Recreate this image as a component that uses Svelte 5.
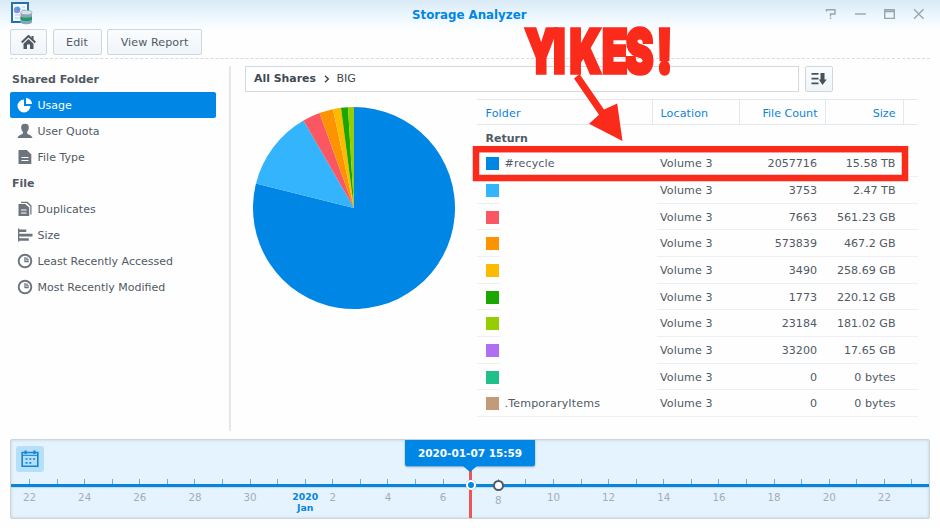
<script>
  const rows = [
    ['#0086e5', '#recycle', '2057716', '15.58 TB'],
    ['#33b4fd', '', '3753', '2.47 TB'],
    ['#fa5762', '', '7663', '561.23 GB'],
    ['#fc9300', '', '573839', '467.2 GB'],
    ['#fdbb00', '', '3490', '258.69 GB'],
    ['#1ca600', '', '1773', '220.12 GB'],
    ['#96cd00', '', '23184', '181.02 GB'],
    ['#b06ef2', '', '33200', '17.65 GB'],
    ['#20c08a', '', '0', '0 bytes'],
    ['#c29c79', '.TemporaryItems', '0', '0 bytes']
  ];

  const groups = [
    { title: 'Shared Folder', items: [['Usage', 'pie'], ['User Quota', 'user'], ['File Type', 'file']] },
    {
      title: 'File',
      items: [
        ['Duplicates', 'copy'],
        ['Size', 'bars'],
        ['Least Recently Accessed', 'clock'],
        ['Most Recently Modified', 'clock']
      ]
    }
  ];

  // Slice boundaries in degrees, clockwise from twelve o'clock
  const slices = [
    [0, 284, '#0086e5'],
    [284, 330, '#33b4fd'],
    [330, 340, '#fa5762'],
    [340, 348, '#fc9300'],
    [348, 352.6, '#fdbb00'],
    [352.6, 356.6, '#1ca600'],
    [356.6, 360, '#96cd00']
  ];
  const R = 101;
  const pt = (deg) => {
    const a = (deg * Math.PI) / 180;
    return `${(R * Math.sin(a)).toFixed(2)} ${(-R * Math.cos(a)).toFixed(2)}`;
  };
  const arc = ([from, to]) => `M0 0L${pt(from)}A${R} ${R} 0 ${to - from > 180 ? 1 : 0} 1 ${pt(to)}Z`;

  const days = Array.from({ length: 33 }, (_, i) => {
    const day = i < 10 ? 22 + i : i - 9;
    return { day, month: day === 1, label: day % 2 === 0 ? String(day) : '' };
  });
</script>

<div class="window">
  <header>
    <svg class="logo" width="22" height="23" viewBox="0 0 22 23">
      <rect x="1" y="1" width="16" height="19" fill="#f5faff" stroke="#2372ae" stroke-width="2" />
      <circle cx="6" cy="8" r="3.2" fill="#8c8ce8" />
      <path d="M6 8V4.5A3.5 3.5 0 0 1 9.5 8Z" fill="#36a5e8" />
      <path d="M11 5h3M11 8h3M4 13h5M4 16h5" stroke="#b9cadb" />
      <path d="M9.500 11v9c0 3 11.500 3 11.500 0v-9z" fill="#8ba6b6" />
      <path d="M9.500 14.500c2 1.600 9.500 1.600 11.500 0v3.300c-2 1.600-9.500 1.600-11.500 0z" fill="#1f9a6c" />
      <ellipse cx="15.250" cy="10.500" rx="5.750" ry="2.300" fill="#d8e2e8" stroke="#8ea3b0" stroke-width=".7" />
    </svg>
    <h1>Storage Analyzer</h1>
    <svg class="controls" width="104" height="14" viewBox="0 0 104 14" fill="none" stroke="#98a5af" stroke-width="1.4">
      <path d="M4.500 4.500V2.700h8.500v4.300H8.500v2.500M8.500 10.500v1.500" />
      <path d="M33 7h11" />
      <path d="M62.700 2.700h9.600v8.700h-9.600zM62.700 4.500h9.600" />
      <path d="M92 2.300l9.500 9.500M101.500 2.300l-9.500 9.500" />
    </svg>
  </header>

  <nav class="toolbar">
    <button class="home" aria-label="Home">
      <svg width="15" height="14" viewBox="0 0 15 14">
        <path d="M.7 7.500L7.500 1l6.800 6.500" fill="none" stroke="#505a64" stroke-width="2" />
        <path d="M10.500 1h2v4l-2-2zM7.500 4L12.500 8.700V14H9V9.500H6V14H2.500V8.700z" fill="#505a64" />
      </svg>
    </button>
    <button class="edit">Edit</button>
    <button class="report">View Report</button>
  </nav>

  <div class="main">
    <aside>
      {#each groups as group}
        <h2>{group.title}</h2>
        {#each group.items as [name, icon]}
          <div class="item" class:active={name === 'Usage'}>
            <svg width="16" height="16" viewBox="0 0 16 16" fill="currentColor">
              {#if icon === 'pie'}
                <path d="M7 2.500V9h6.500A6.500 6.500 0 1 1 7 2.500z" /><path d="M9 1a6 6 0 0 1 6 6H9z" />
              {:else if icon === 'user'}
                <path d="M8 .8c2.900 0 4 1.500 3.800 4-.1 1.900-.8 3.200-1.700 4.100v1.500c.5 1 4.900 1.300 5.400 4.600H.5c.5-3.300 4.900-3.600 5.400-4.600V8.900C5 8 4.300 6.700 4.200 4.800 4 2.300 5.100.8 8 .8z" />
              {:else if icon === 'file'}
                <path d="M1.500 1h8.300l4.500 4.500V15H1.500z" /><path d="M4.500 8.500h7M4.500 11.500h7" stroke="#fff" stroke-width="1.100" />
              {:else if icon === 'copy'}
                <path d="M4 .8h6.500L14.500 4.500V13.500h-1.200V5.200L9.600 1.900H4z" /><path d="M1.500 3h6.700l4 3.600V15H1.500z" /><path d="M4 9h5.500M4 12h5.500" stroke="#fff" stroke-width="1.100" />
              {:else if icon === 'bars'}
                <path d="M1 1.500h1.300v13H1zM2.300 2.500h7v2.600h-7zM2.300 6.800h13.200v2.700H2.300zM2.300 11.200h9.500v2.500H2.300z" />
              {:else}
                <circle cx="8" cy="8" r="6.300" fill="none" stroke="currentColor" stroke-width="1.900" />
                <path d="M8 4v4.700h3.800M9.900 4.500v2.300h2" fill="none" stroke="currentColor" stroke-width="1.300" />
              {/if}
            </svg>
            <span>{name}</span>
          </div>
        {/each}
      {/each}
    </aside>

    <section>
      <div class="pathbar">
        <div class="crumbs">
          <b>All Shares</b>
          <svg width="6" height="8" viewBox="0 0 6 8"><path d="M1 .8L4.300 4 1 7.200" fill="none" stroke="#404850" stroke-width="1.500" /></svg>
          <span>BIG</span>
        </div>
        <button class="sort" aria-label="Sort">
          <svg width="16" height="12" viewBox="0 0 16 12" fill="#48515a"><path d="M.5 0h7v1.700h-7zM.5 4.800h7v1.700h-7zM.5 9.600h7v1.700h-7zM9.500 0h4v6.500h2.200L11.500 12 7.800 6.500h1.700z" /></svg>
        </button>
      </div>
      <div class="content">
        <svg class="pie" width="204" height="204" viewBox="-102 -102 204 204">
          {#each slices as slice}
            <path d={arc(slice)} fill={slice[2]} />
          {/each}
        </svg>
        <div class="table">
          <div class="thead">
            <span class="c1">Folder</span><span class="c2">Location</span><span class="c3">File Count</span><span class="c4">Size</span>
          </div>
          <div class="return">Return</div>
          {#each rows as [color, name, count, size]}
            <div class="row" class:blank={!name}>
              <span class="c1"><i style="background: {color}"></i><em>{name}</em></span>
              <span class="c2">Volume 3</span>
              <span class="c3">{count}</span>
              <span class="c4">{size}</span>
            </div>
          {/each}
        </div>
      </div>
    </section>
  </div>

  <footer>
    <div class="cal">
      <svg width="18" height="18" viewBox="0 0 18 18" fill="none" stroke="#1485d2">
        <path d="M1.200 2.500h15.600v13.800H1.200z" stroke-width="1.600" />
        <path d="M1 5.300h16" stroke-width="1.100" />
        <path d="M4.600 .5v3.500M13.400 .5v3.500" stroke-width="2.200" />
        <path d="M4.500 9h10M4.500 12.800h6.500" stroke-width="1.700" stroke-dasharray="2 1.800" />
      </svg>
    </div>
    <div class="ticks">{#each days as _}<i></i>{/each}</div>
    <div class="axis"></div>
    <div class="labels">
      {#each days as d}
        <span class:month={d.month} class:latest={d.day === 8}>{#if d.month}2020<br />Jan{:else}{d.label}{/if}</span>
      {/each}
    </div>
    <div class="needle"></div>
    <div class="knob"></div>
    <div class="end"></div>
    <div class="tip">2020-01-07 15:59</div>
  </footer>

  <svg class="notes" width="940" height="528" viewBox="0 0 940 528">
    <rect x="476" y="149.200" width="429" height="28.800" fill="none" stroke="#fb2b1b" stroke-width="6.500" />
    <path d="M579.500 74L604 109.500L617.200 103.500L622.500 141L589 123.800L599 114.800L574 78.500Z" fill="#fb2b1b" />
    <g class="shout" transform="translate(0 72.500) scale(.7 1)">
      <text x="749.500 790.500 813.500 860 893.500 938">YIKES!</text>
    </g>
  </svg>
</div>

<style>
  :global(body) { background: #fff; }
  .window {
    position: relative; width: 940px; height: 528px; overflow: hidden; box-sizing: border-box;
    background: linear-gradient(#d9eaf7 0, #eaf5fd 14px, #f9fdff 27px, #fefefe 30px);
    font: 11.1px/14px "DejaVu Sans", Verdana, sans-serif; color: #505a64;
  }
  .window * { box-sizing: border-box; }
  h1, h2 { margin: 0; }
  header { height: 29px; display: flex; align-items: flex-start; }
  .logo { margin: 2px 0 0 11px; width: 22px; }
  h1 { flex: 1; text-align: center; margin: 8px 0 0 84px; font-size: 11.8px; line-height: 14px; color: #0086e5; }
  .controls { margin: 7px 14.500px 0 0; }
  .toolbar { height: 30px; margin: 0 10px; display: flex; border-bottom: 1px dashed #d3dbe0; }
  button {
    height: 26px; padding: 0; border: 1px solid #ced7df; border-radius: 2px; background: linear-gradient(#fafcfe, #f0f5fa);
    font: inherit; color: #505a64; display: flex; justify-content: center; align-items: center;
  }
  .home { width: 37px; }
  .edit { width: 49px; margin-left: 5.500px; padding-top: 2px; letter-spacing: .1px; }
  .report { width: 95px; margin-left: 5.500px; padding-top: 2px; letter-spacing: .1px; }
  .main { display: flex; height: 380px; padding-top: 7px; }
  aside { width: 231px; height: 365px; padding-left: 10px; border-right: 2px solid #e4e6e8; }
  h2 { height: 26px; padding-left: 2px; font-size: 11px; line-height: 28px; color: #505a64; }
  .item { width: 206px; height: 26px; padding-left: 7px; display: flex; align-items: center; gap: 4.500px; border-radius: 2px; white-space: nowrap; font-size: 11px; }
  .item span { padding-top: 2px; }
  .item svg { color: #6c747d; }
  .active, .active svg { color: #fff; }
  .active { background: #0086e5; }
  section { margin-left: 14px; }
  .pathbar { display: flex; gap: 6px; }
  .crumbs { width: 554px; height: 26px; border: 1px solid #d4d9de; background: #fff; padding-left: 8px; display: flex; align-items: center; color: #404850; }
  .crumbs svg { margin: 0 6.500px 0 8px; }
  .crumbs b { font-size: 10.900px; }
  .sort { width: 27.500px; }
  .content { display: flex; }
  .pie { margin: 14px 0 0 7px; flex: none; }
  .table { margin: 7px 0 0 21px; width: 441px; }
  .thead { height: 26px; display: flex; border: solid #e4e8eb; border-width: 1px 0; color: #0a84dc; line-height: 28px; }
  .thead span { height: 24px; border-right: 1px solid #e4e8eb; }
  .c1 { width: 176px; padding-left: 8.500px; display: flex; align-items: center; letter-spacing: .15px; }
  .thead .c1 { display: block; }
  .c2 { width: 87px; padding-left: 7px; letter-spacing: .1px; }
  .thead .c2 { padding-left: 7.500px; }
  .c3 { width: 86px; padding-right: 7.500px; text-align: right; }
  .c4 { width: 78px; padding-right: 7.500px; text-align: right; }
  .return { height: 25.300px; padding-left: 8.500px; font-weight: bold; line-height: 27px; font-size: 11px; }
  .row { height: 26.700px; display: flex; line-height: 28.700px; background: linear-gradient(#edf0f2, #edf0f2) bottom / 100% 1px no-repeat; }
  .row.blank { background: linear-gradient(#edf0f2, #edf0f2) left bottom / 23px 1px no-repeat, linear-gradient(#edf0f2, #edf0f2) right bottom / 261px 1px no-repeat; }
  .row i { width: 13px; height: 13px; margin-right: 6px; flex: none; }
  .row em { font-style: normal; align-self: flex-start; }
  .row .c1 { height: 26.700px; }
  .row .c3 { padding-right: 9px; }
  .row .c4 { padding-right: 8.500px; }
  footer { position: relative; width: 920px; height: 80px; margin-left: 10px; border: 1px solid #ccd5dc; border-radius: 2px; background: #e5f3ff; box-shadow: inset 0 0 3px #b9cbd8; }
  .cal { width: 28px; height: 26px; margin: 5.500px 0 0 5px; border-radius: 3px; background: #b6dffa; display: flex; align-items: center; justify-content: center; }
  .ticks, .labels { display: flex; margin-left: 4.700px; width: 910.500px; }
  .ticks { height: 5px; margin-top: 7.500px; }
  .ticks i { width: 27.590px; display: flex; justify-content: center; }
  .ticks i::before { content: ""; width: 1px; height: 5px; background: #65aee4; }
  .axis { height: 3px; background: #0884dc; box-shadow: 0 1px 1px #c4d8e8; }
  .labels { padding-top: 3px; }
  .labels span { width: 27.590px; display: flex; justify-content: center; font-size: 10.300px; color: #a0aeba; }
  .labels .month { display: block; text-align: center; font-weight: bold; font-size: 9.300px; line-height: 11px; color: #0a84dc; padding-top: 1px; }
  .labels .latest { padding-top: 3px; }
  .needle { position: absolute; left: 458px; top: 26px; width: 3px; height: 52px; background: #f15358; }
  .knob { position: absolute; left: 455px; top: 40px; width: 10px; height: 10px; border: 2px solid #fff; border-radius: 50%; background: #0086e5; box-shadow: 0 0 1px #5a8fb5; }
  .end { position: absolute; left: 482px; top: 40px; width: 11px; height: 11px; border: 2px solid #505a64; border-radius: 50%; background: #fff; }
  .tip { position: absolute; left: 394px; top: 0; width: 130px; height: 26px; background: #0086e5; border-radius: 0 0 2px 2px; color: #fff; font-weight: bold; font-size: 10.500px; line-height: 26px; text-align: center; box-shadow: 0 1px 2px #6f9cc0; }
  .tip::after { content: ""; position: absolute; left: 58px; top: 26px; border: solid transparent; border-width: 6px 7px 0; border-top-color: #0086e5; }
  .notes { position: absolute; left: 0; top: 0; pointer-events: none; }
  .shout { font: 900 60px Inter, "Liberation Sans", sans-serif; fill: #fb2b1b; stroke: #fb2b1b; stroke-width: 3.500px; }
</style>
